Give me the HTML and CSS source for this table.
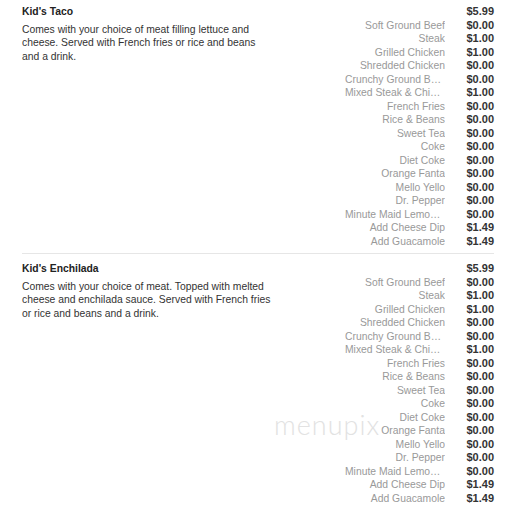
FILE: index.html
```html
<!DOCTYPE html>
<html>
<head>
<meta charset="utf-8">
<link rel="stylesheet" href="styles.css">
</head>
<body>
<div class="menu">
  <div class="item">
    <div class="info">
      <div class="title">Kid's Taco</div>
      <div class="desc">Comes with your choice of meat filling lettuce and cheese. Served with French fries or rice and beans and a drink.</div>
    </div>
    <div class="options">
      <span class="name"></span><span class="price">$5.99</span>
      <span class="name">Soft Ground Beef</span><span class="price">$0.00</span>
      <span class="name">Steak</span><span class="price">$1.00</span>
      <span class="name">Grilled Chicken</span><span class="price">$1.00</span>
      <span class="name">Shredded Chicken</span><span class="price">$0.00</span>
      <span class="name">Crunchy Ground Beef</span><span class="price">$0.00</span>
      <span class="name">Mixed Steak &amp; Chicken</span><span class="price">$1.00</span>
      <span class="name">French Fries</span><span class="price">$0.00</span>
      <span class="name">Rice &amp; Beans</span><span class="price">$0.00</span>
      <span class="name">Sweet Tea</span><span class="price">$0.00</span>
      <span class="name">Coke</span><span class="price">$0.00</span>
      <span class="name">Diet Coke</span><span class="price">$0.00</span>
      <span class="name">Orange Fanta</span><span class="price">$0.00</span>
      <span class="name">Mello Yello</span><span class="price">$0.00</span>
      <span class="name">Dr. Pepper</span><span class="price">$0.00</span>
      <span class="name">Minute Maid Lemonade</span><span class="price">$0.00</span>
      <span class="name">Add Cheese Dip</span><span class="price">$1.49</span>
      <span class="name">Add Guacamole</span><span class="price">$1.49</span>
    </div>
  </div>
  <div class="item">
    <div class="info">
      <div class="title">Kid's Enchilada</div>
      <div class="desc">Comes with your choice of meat. Topped with melted cheese and enchilada sauce. Served with French fries or rice and beans and a drink.</div>
    </div>
    <div class="options">
      <span class="name"></span><span class="price">$5.99</span>
      <span class="name">Soft Ground Beef</span><span class="price">$0.00</span>
      <span class="name">Steak</span><span class="price">$1.00</span>
      <span class="name">Grilled Chicken</span><span class="price">$1.00</span>
      <span class="name">Shredded Chicken</span><span class="price">$0.00</span>
      <span class="name">Crunchy Ground Beef</span><span class="price">$0.00</span>
      <span class="name">Mixed Steak &amp; Chicken</span><span class="price">$1.00</span>
      <span class="name">French Fries</span><span class="price">$0.00</span>
      <span class="name">Rice &amp; Beans</span><span class="price">$0.00</span>
      <span class="name">Sweet Tea</span><span class="price">$0.00</span>
      <span class="name">Coke</span><span class="price">$0.00</span>
      <span class="name">Diet Coke</span><span class="price">$0.00</span>
      <span class="name">Orange Fanta</span><span class="price">$0.00</span>
      <span class="name">Mello Yello</span><span class="price">$0.00</span>
      <span class="name">Dr. Pepper</span><span class="price">$0.00</span>
      <span class="name">Minute Maid Lemonade</span><span class="price">$0.00</span>
      <span class="name">Add Cheese Dip</span><span class="price">$1.49</span>
      <span class="name">Add Guacamole</span><span class="price">$1.49</span>
    </div>
  </div>
  <div class="watermark">menupix</div>
</div>
</body>
</html>
```
FILE: styles.css
```css
* { box-sizing: border-box; }
html, body { margin: 0; padding: 0; background: #fff; }
body {
  font-family: "Liberation Sans", Arial, sans-serif;
  font-size: 10.35px;
  line-height: 13.5px;
  color: #333;
}
.menu {
  position: relative;
  padding: 0 14px 0 22px;
}
.item {
  display: flex;
  justify-content: space-between;
  padding: 8px 0 5px;
  border-bottom: 1px solid #e6e6e6;
}
.item:first-child { padding-top: 5px; }
.item:last-of-type { border-bottom: none; }
.info { width: 252px; }
.title {
  font-weight: bold;
  color: #222;
  margin-bottom: 4px;
}
.desc { color: #333; }
.options {
  display: grid;
  grid-template-columns: 100px 28px;
  column-gap: 21px;
}
.name {
  color: #999;
  text-align: right;
  white-space: nowrap;
  overflow: hidden;
  text-overflow: ellipsis;
}
.price {
  font-weight: bold;
  font-size: 11px;
  color: #333;
  text-align: right;
  white-space: nowrap;
}
.watermark {
  position: absolute;
  left: 274px;
  top: 410px;
  font-family: "Lato", sans-serif;
  font-weight: 300;
  font-size: 27px;
  line-height: 30px;
  letter-spacing: 1px;
  color: #e2e2e2;
}
```
